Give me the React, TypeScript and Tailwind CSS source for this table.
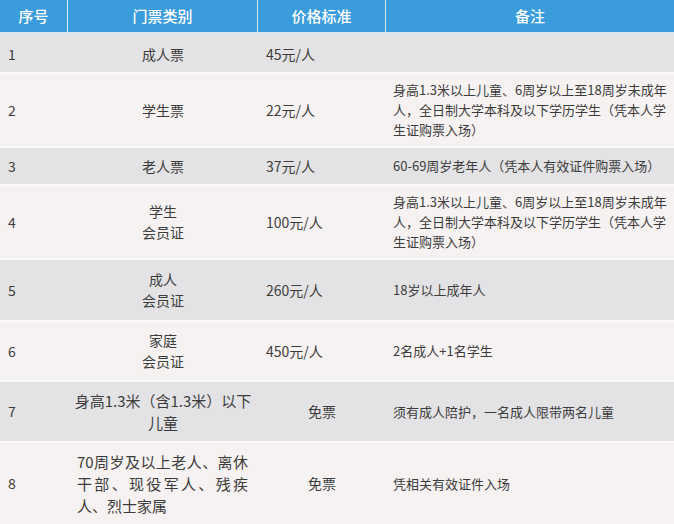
const font = { fontFamily: '"Microsoft YaHei", "Noto Sans CJK SC", "Noto Sans", sans-serif' };

type Row = {
  no: string;
  type: React.ReactNode;
  price: React.ReactNode;
  note: React.ReactNode;
  h: string;
  gray: boolean;
};

const student = (
  <>
    身高1.3米以上儿童、6周岁以上至18周岁未成年
    <br />
    人，全日制大学本科及以下学历学生（凭本人学
    <br />
    生证购票入场）
  </>
);

const rows: Row[] = [
  { no: "1", type: "成人票", price: "45元/人", note: "", h: "h-[36px]", gray: true },
  { no: "2", type: "学生票", price: "22元/人", note: student, h: "h-[72px]", gray: false },
  { no: "3", type: "老人票", price: "37元/人", note: "60-69周岁老年人（凭本人有效证件购票入场）", h: "h-[36px]", gray: true },
  { no: "4", type: <>学生<br />会员证</>, price: "100元/人", note: student, h: "h-[72px]", gray: false },
  { no: "5", type: <>成人<br />会员证</>, price: "260元/人", note: "18岁以上成年人", h: "h-[60px]", gray: true },
  { no: "6", type: <>家庭<br />会员证</>, price: "450元/人", note: "2名成人+1名学生", h: "h-[58px]", gray: false },
];

export default function App() {
  return (
    <div className="w-[674px] h-[524px] overflow-hidden bg-[#fafafa] text-[#3c3c3c]" style={font}>
      {/* header */}
      <div className="flex h-[32px] bg-[#3b9cdc] text-white text-[15px] font-medium">
        <div className="w-[68px] flex items-center justify-center border-r border-[#d8ecf8]">序号</div>
        <div className="w-[190px] flex items-center justify-center border-r border-[#d8ecf8]">门票类别</div>
        <div className="w-[128px] flex items-center justify-center border-r border-[#d8ecf8]">价格标准</div>
        <div className="flex-1 flex items-center justify-center">备注</div>
      </div>
      <div className="h-[4px] bg-[#dfe4ec]" />

      <div className="flex flex-col gap-[2px]">
        {rows.map((r) => (
          <div key={r.no} className={`flex ${r.h} ${r.gray ? "bg-[#e3e3e5]" : "bg-[#f6f2f2]"}`}>
            <div className="w-[68px] pl-[8px] flex items-center text-[14px]">{r.no}</div>
            <div className="w-[190px] flex items-center justify-center text-center text-[14px] leading-[21px]">{r.type}</div>
            <div className="w-[128px] pl-[8px] flex items-center text-[14px]">{r.price}</div>
            <div className="flex-1 pl-[7px] flex items-center text-[13px] leading-[20px] whitespace-nowrap">{r.note}</div>
          </div>
        ))}

        <div className="flex h-[59px] bg-[#e3e3e5]">
          <div className="w-[68px] pl-[8px] flex items-center text-[14px]">7</div>
          <div className="w-[190px] flex flex-col items-center justify-center text-[15px] leading-[22px] whitespace-nowrap">
            <span>身高1.3米（含1.3米）以下</span>
            <span>儿童</span>
          </div>
          <div className="w-[128px] flex items-center justify-center text-[14px]">免票</div>
          <div className="flex-1 pl-[7px] flex items-center text-[13px]">须有成人陪护，一名成人限带两名儿童</div>
        </div>

        <div className="flex h-[81px] bg-[#f6f2f2]">
          <div className="w-[68px] pl-[8px] flex items-center text-[14px]">8</div>
          <div className="w-[190px] px-[10px] pl-[9px] flex flex-col justify-center text-[15px] leading-[22px] whitespace-nowrap">
            <div className="[text-align-last:justify]">70周岁及以上老人、离休</div>
            <div className="[text-align-last:justify]">干部、现役军人、残疾</div>
            <div>人、烈士家属</div>
          </div>
          <div className="w-[128px] flex items-center justify-center text-[14px]">免票</div>
          <div className="flex-1 pl-[7px] flex items-center text-[13px]">凭相关有效证件入场</div>
        </div>
      </div>
    </div>
  );
}
